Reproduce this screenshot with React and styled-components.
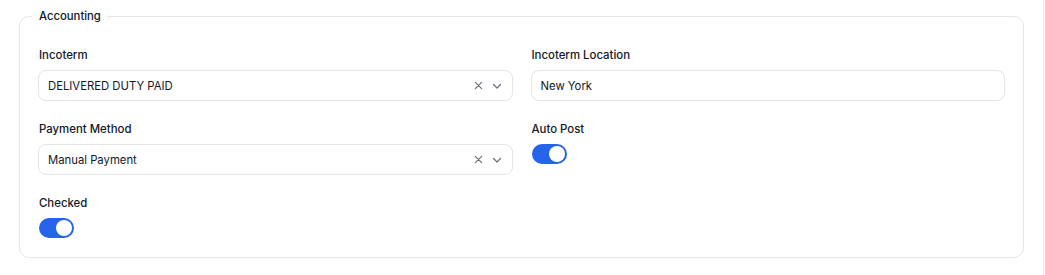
import React from 'react';
import styled, {createGlobalStyle} from 'styled-components';

const GlobalStyle = createGlobalStyle`
    * { box-sizing: border-box; }
    body {
        margin: 0;
        background: #ffffff;
        font-family: Inter, 'Liberation Sans', sans-serif;
        color: #111827;
    }
`

const Page = styled.div`
    width: 1044px;
    height: 275px;
    padding: 8px 19px 0 19px;
    border-right: 1px solid #e6e6e6;
`

const Fieldset = styled.fieldset`
    margin: 0;
    padding: 23px 12px 19px;
    border: 1px solid #e5e5e5;
    border-radius: 10px;
    min-width: 0;
`

const Legend = styled.legend`
    padding: 0 7px;
    font-size: 11.3px;
    line-height: 16px;
    font-weight: 500;
    color: #111827;
`

const Grid = styled.div`
    display: grid;
    grid-template-columns: 1fr 1fr;
    column-gap: 18px;
    row-gap: 20px;
    padding: 0 6px;
`

const Field = styled.div`
    display: flex;
    flex-direction: column;
    gap: 7px;
`

const Label = styled.label`
    padding-left: 1px;
    font-size: 11.4px;
    line-height: 16px;
    font-weight: 500;
    color: #111827;
`

const InputBox = styled.div`
    height: 31px;
    display: flex;
    align-items: center;
    padding: 0 10px 0 9px;
    border: 1px solid #e5e5e5;
    border-radius: 8px;
    background: #ffffff;
    font-size: 11.3px;
    color: #111827;
`

const Value = styled.span`
    flex: 1;
`

const Icons = styled.div`
    display: flex;
    align-items: center;
    gap: 9px;
    color: #6b7280;

    svg {
        display: block;
    }
`

const Switch = styled.button`
    width: 35px;
    height: 20px;
    margin-left: 1px;
    padding: 2px;
    border: none;
    border-radius: 10px;
    background: ${props => (props.$on ? '#2563eb' : '#d1d5db')};
    display: flex;
    justify-content: ${props => (props.$on ? 'flex-end' : 'flex-start')};
    cursor: pointer;

    span {
        width: 16px;
        height: 16px;
        border-radius: 50%;
        background: #ffffff;
    }
`

const ClearIcon = () => (
    <svg width="9" height="9" viewBox="0 0 10 10" fill="none" stroke="currentColor" strokeWidth="1.4" strokeLinecap="round">
        <path d="M1.5 1.5l7 7M8.5 1.5l-7 7" />
    </svg>
)

const ChevronIcon = () => (
    <svg width="10" height="10" viewBox="0 0 10 10" fill="none" stroke="currentColor" strokeWidth="1.3" strokeLinecap="round" strokeLinejoin="round">
        <path d="M1.5 3.5L5 7l3.5-3.5" />
    </svg>
)

const Select = ({value}) => (
    <InputBox>
        <Value>{value}</Value>
        <Icons>
            <ClearIcon />
            <ChevronIcon />
        </Icons>
    </InputBox>
)

const App = () => {
    return (
        <Page>
            <GlobalStyle />
            <Fieldset>
                <Legend>Accounting</Legend>
                <Grid>
                    <Field>
                        <Label>Incoterm</Label>
                        <Select value='DELIVERED DUTY PAID' />
                    </Field>
                    <Field>
                        <Label>Incoterm Location</Label>
                        <InputBox><Value>New York</Value></InputBox>
                    </Field>
                    <Field>
                        <Label>Payment Method</Label>
                        <Select value='Manual Payment' />
                    </Field>
                    <Field>
                        <Label>Auto Post</Label>
                        <div><Switch $on><span /></Switch></div>
                    </Field>
                    <Field>
                        <Label>Checked</Label>
                        <div><Switch $on><span /></Switch></div>
                    </Field>
                </Grid>
            </Fieldset>
        </Page>
    );
};

export default App;
